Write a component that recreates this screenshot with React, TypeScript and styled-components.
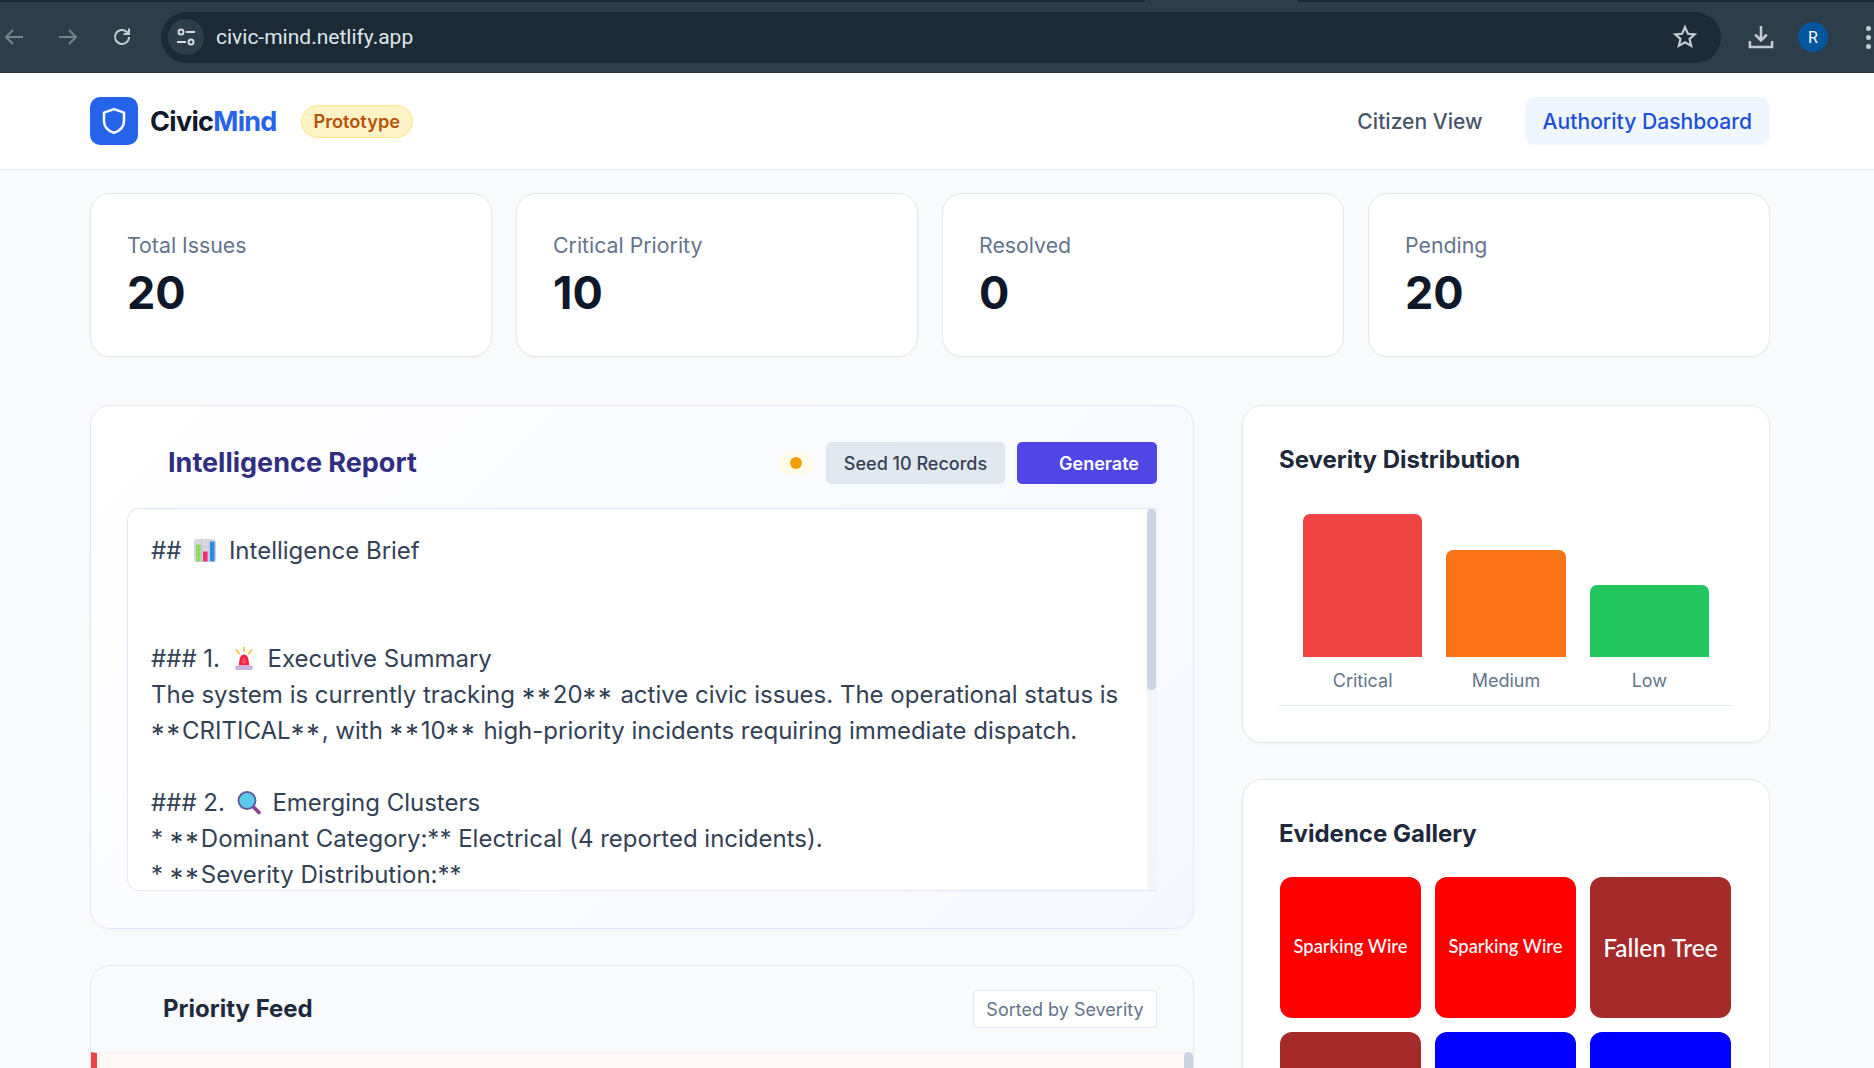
import React from "react";
import styled, { createGlobalStyle } from "styled-components";

const Global = createGlobalStyle`
  html, body { margin: 0; padding: 0; height: 100%; overflow: hidden; background: #f8fafc; }
  body { font-family: Inter, "Liberation Sans", sans-serif; color: #0f172a; }
  * { box-sizing: border-box; }
`;

const Page = styled.div`
  height: 1068px;
  overflow: hidden;
  background: #f8fafc;
`;

/* ---------- browser chrome ---------- */
const Chrome = styled.div`
  height: 73px;
  background: #2d3e4b;
  border-bottom: 1px solid #27353f;
`;
const TabStrip = styled.div`
  height: 2px;
  display: flex;
`;
const TabEdge = styled.div<{ $w: string }>`
  width: ${p => p.$w};
  flex: ${p => (p.$w === "auto" ? 1 : "none")};
  background: #1a2a36;
`;
const TabGap = styled.div`
  width: 153px;
`;
const Toolbar = styled.div`
  height: 70px;
  display: flex;
  align-items: center;
`;
const NavIcon = styled.div<{ $dim?: boolean }>`
  width: 28px;
  height: 28px;
  margin-right: ${p => (p.$dim ? 26 : 20)}px;
  color: ${p => (p.$dim ? "#76838d" : "#c4ccd3")};
  display: flex;
  align-items: center;
  justify-content: center;
  flex: none;
`;
const Omnibox = styled.div`
  flex: none;
  width: 1560px;
  height: 51px;
  margin-left: 5px;
  background: #1a2a36;
  border-radius: 26px;
  display: flex;
  align-items: center;
  padding: 0 23px 0 7px;
`;
const SiteChip = styled.div`
  width: 36px;
  height: 36px;
  border-radius: 50%;
  background: #2d3e4b;
  color: #d5dce2;
  display: flex;
  align-items: center;
  justify-content: center;
  flex: none;
`;
const Url = styled.div`
  margin-left: 12px;
  flex: 1;
  font-family: Roboto, "Noto Sans", sans-serif;
  font-size: 21px;
  color: #dfe6ec;
`;
const ChromeRight = styled.div`
  display: flex;
  align-items: center;
  margin-left: 26px;
  color: #c4ccd3;
`;
const Avatar = styled.div`
  width: 30px;
  height: 30px;
  border-radius: 50%;
  background: #05559f;
  color: #fff;
  font-size: 16px;
  font-family: Roboto, sans-serif;
  display: flex;
  align-items: center;
  justify-content: center;
  margin: 0 38px 0 23px;
`;
const Dots = styled.div`
  display: flex;
  flex-direction: column;
  gap: 4px;
`;
const Dot = styled.span`
  width: 5px;
  height: 5px;
  border-radius: 50%;
  background: #c4ccd3;
`;

/* ---------- app header ---------- */
const Header = styled.header`
  height: 97px;
  background: #fff;
  border-bottom: 1px solid #e2e8f0;
  padding: 0 104px 0 90px;
  display: flex;
  align-items: center;
  justify-content: space-between;
`;
const Brand = styled.div`
  display: flex;
  align-items: center;
`;
const LogoMark = styled.div`
  width: 48px;
  height: 48px;
  border-radius: 10px;
  background: #2563eb;
  color: #fff;
  display: flex;
  align-items: center;
  justify-content: center;
`;
const BrandName = styled.div`
  margin-left: 12px;
  font-size: 27px;
  font-weight: 700;
  letter-spacing: -0.7px;
  color: #0f172a;
`;
const BrandAccent = styled.span`
  color: #2563eb;
`;
const Badge = styled.div`
  margin-left: 24px;
  height: 33px;
  width: 112px;
  border-radius: 17px;
  background: #fef3c7;
  border: 1px solid #fde68a;
  color: #b45309;
  font-size: 18.2px;
  font-weight: 600;
  display: flex;
  align-items: center;
  justify-content: center;
`;
const Nav = styled.nav`
  display: flex;
  align-items: center;
  gap: 24px;
`;
const NavLink = styled.a<{ $active?: boolean }>`
  height: 48px;
  padding: 0 18px;
  border-radius: 10px;
  font-size: 21.1px;
  font-weight: 500;
  display: flex;
  align-items: center;
  color: ${p => (p.$active ? "#1d4ed8" : "#475569")};
  background: ${p => (p.$active ? "#eff6ff" : "transparent")};
`;

/* ---------- body ---------- */
const Main = styled.main`
  width: 1680px;
  margin-left: 90px;
  padding-top: 23px;
`;
const StatGrid = styled.section`
  display: grid;
  grid-template-columns: repeat(4, 402px);
  gap: 24px;
`;
const StatCard = styled.div`
  height: 164px;
  background: #fff;
  border: 1px solid #e2e8f0;
  border-radius: 20px;
  padding: 37px 36px 0;
  box-shadow: 0 1px 3px rgba(15, 23, 42, 0.03);
`;
const StatLabel = styled.div`
  font-size: 21.3px;
  line-height: 28px;
  font-weight: 400;
  color: #64748b;
`;
const StatValue = styled.div`
  margin-top: 6px;
  font-size: 45px;
  line-height: 56px;
  font-weight: 700;
  color: #0f172a;
`;
const Columns = styled.div`
  margin-top: 48px;
  display: grid;
  grid-template-columns: 1104px 528px;
  column-gap: 48px;
  align-items: start;
`;
const Stack = styled.div`
  display: flex;
  flex-direction: column;
  gap: 36px;
`;
const ReportCard = styled.section`
  height: 524px;
  border: 1px solid #e0e7ff;
  border-radius: 20px;
  background: linear-gradient(135deg, #ffffff 0%, #f5f7ff 100%);
  padding: 36px 36px 0;
  box-shadow: 0 1px 3px rgba(15, 23, 42, 0.03);
`;
const ReportHead = styled.div`
  height: 42px;
  display: flex;
  align-items: center;
`;
const ReportTitle = styled.h2`
  margin: 0 0 2px 41px;
  flex: 1;
  font-size: 27px;
  font-weight: 700;
  color: #312e81;
`;
const StatusPill = styled.div`
  width: 36px;
  height: 24px;
  border-radius: 12px;
  background: #fffbeb;
  display: flex;
  align-items: center;
  justify-content: center;
  margin-right: 12px;
`;
const StatusDot = styled.span`
  width: 12px;
  height: 12px;
  border-radius: 50%;
  background: #f59e0b;
`;
const SecondaryButton = styled.button`
  width: 179px;
  height: 42px;
  border: 0;
  border-radius: 5px;
  background: #e2e8f0;
  color: #334155;
  font: 500 18px Inter, sans-serif;
`;
const PrimaryButton = styled.button`
  width: 140px;
  height: 42px;
  margin-left: 12px;
  border: 0;
  border-radius: 5px;
  background: #4f46e5;
  color: #fff;
  font: 600 18px Inter, sans-serif;
  text-align: right;
  padding: 0 18px 0 0;
`;
const ReportBody = styled.div`
  margin-top: 24px;
  height: 383px;
  display: flex;
  background: #fff;
  border: 1px solid #e0e7ff;
  border-right-color: #eef2ff;
  border-radius: 12px 0 0 12px;
  overflow: hidden;
`;
const ReportText = styled.div`
  flex: 1;
  padding: 24px 23px 0;
  font-size: 24px;
  line-height: 36px;
  color: #334155;
  white-space: pre-wrap;
  overflow: hidden;
`;
const ScrollTrack = styled.div`
  flex: none;
  width: 9px;
  background: #f1f5f9;
`;
const ScrollThumb = styled.div`
  height: 181px;
  background: #cbd5e1;
  border-radius: 5px;
`;
const Stars = styled.span`
  font-size: 27px;
  letter-spacing: 2px;
  line-height: 0;
  vertical-align: -5px;
`;
const Emoji = styled.svg`
  width: 24px;
  height: 25px;
  vertical-align: -4px;
  margin: 0 5px;
`;
const FeedCard = styled.section`
  height: 200px;
  background: #f8fafc;
  border: 1px solid #e2e8f0;
  border-radius: 20px;
  overflow: hidden;
`;
const FeedHead = styled.div`
  height: 86px;
  padding: 0 36px 0 72px;
  display: flex;
  align-items: center;
  justify-content: space-between;
`;
const FeedTitle = styled.h2`
  margin: 0 0 2px;
  font-size: 24px;
  font-weight: 700;
  color: #1e293b;
`;
const SortBadge = styled.div`
  width: 184px;
  height: 38px;
  background: #fff;
  border: 1px solid #e2e8f0;
  border-radius: 4px;
  color: #64748b;
  font-size: 18px;
  display: flex;
  align-items: center;
  justify-content: center;
`;
const FeedList = styled.div`
  display: flex;
  height: 120px;
`;
const FeedItem = styled.div`
  flex: 1;
  background: #fef7f7;
  border-left: 6px solid #ef4444;
  border-top: 1px solid #fdf0f0;
`;
const FeedScroll = styled.div`
  width: 9px;
  background: #cbd5e1;
  border-radius: 5px 5px 0 0;
`;
const SideCard = styled.section`
  background: #fff;
  border: 1px solid #e2e8f0;
  border-radius: 20px;
  padding: 36px;
  box-shadow: 0 1px 3px rgba(15, 23, 42, 0.03);
`;
const SideTitle = styled.h2`
  margin: 0;
  font-size: 24px;
  line-height: 36px;
  font-weight: 700;
  color: #1e293b;
`;
const Chart = styled.div`
  height: 228px;
  padding: 0 24px;
  border-bottom: 1px solid #e2e8f0;
  display: grid;
  grid-template-columns: repeat(3, 1fr);
  column-gap: 24px;
  align-items: end;
`;
const BarCol = styled.div`
  display: flex;
  flex-direction: column;
  align-items: stretch;
`;
const Bar = styled.div<{ $h: number; $c: string }>`
  height: ${p => p.$h}px;
  background: ${p => p.$c};
  border-radius: 7px 7px 0 0;
`;
const BarLabel = styled.div`
  height: 48px;
  line-height: 48px;
  text-align: center;
  font-size: 18px;
  color: #64748b;
`;
const Gallery = styled.div`
  margin-top: 25px;
  display: grid;
  grid-template-columns: repeat(3, 141px);
  grid-auto-rows: 141px;
  gap: 14px;
  padding-left: 1px;
`;
const Tile = styled.div<{ $c: string; $big?: boolean }>`
  background: ${p => p.$c};
  border-radius: 12px;
  color: #fff;
  font-family: Lato, sans-serif;
  font-size: ${p => (p.$big ? 24.5 : 18.4)}px;
  font-weight: 500;
  display: flex;
  align-items: center;
  justify-content: center;
  padding-bottom: ${p => (p.$big ? 0 : 3)}px;
`;

const ChartEmoji = () => (
  <Emoji viewBox="0 0 24 24">
    <rect x="1" y="0.5" width="22" height="23" rx="3" fill="#d9d6e2" />
    <path d="M1 8h22M1 16h22M8.5 1v22M16 1v22" stroke="#c3bfcf" strokeWidth="0.8" />
    <rect x="3" y="6" width="4.6" height="17" fill="#8fdc5d" />
    <rect x="10" y="13" width="4.6" height="10" fill="#ea2f78" />
    <rect x="17" y="3" width="4.6" height="20" fill="#2a8fe0" />
  </Emoji>
);
const SirenEmoji = () => (
  <Emoji viewBox="0 0 24 24">
    <path d="M12 1v4M4.500 3.500l2.500 3.500M19.500 3.500L17 7" stroke="#fbc02d" strokeWidth="1.6" strokeLinecap="round" />
    <path d="M7 19c0-7 1.500-11 5-11s5 4 5 11z" fill="#f5223f" />
    <path d="M10 17c0-3 .5-5 2-7 1 2 2 4 2 7z" fill="#ff6b78" opacity=".6" />
    <rect x="3.500" y="19" width="17" height="4.500" rx="1" fill="#c9b6e0" />
  </Emoji>
);
const LensEmoji = () => (
  <Emoji viewBox="0 0 24 24">
    <path d="M15 15l7 7" stroke="#8a3f90" strokeWidth="3.6" strokeLinecap="round" />
    <circle cx="10" cy="10" r="8.500" fill="#5bcbeb" stroke="#5f5a9e" strokeWidth="1.8" />
  </Emoji>
);

const stats = [
  ["Total Issues", "20"],
  ["Critical Priority", "10"],
  ["Resolved", "0"],
  ["Pending", "20"],
];

const bars: [string, number, string][] = [
  ["Critical", 143, "#ef4444"],
  ["Medium", 107, "#f97316"],
  ["Low", 72, "#22c55e"],
];

export default function App() {
  return (
    <Page>
      <Global />
      <Chrome>
        <TabStrip>
          <TabEdge $w="1145px" />
          <TabGap />
          <TabEdge $w="auto" />
        </TabStrip>
        <Toolbar>
          <NavIcon $dim>
            <svg width="24" height="24" viewBox="0 0 24 24" fill="none" stroke="currentColor" strokeWidth="2"><path d="M21 12H4M11 5l-7 7 7 7" /></svg>
          </NavIcon>
          <NavIcon $dim>
            <svg width="24" height="24" viewBox="0 0 24 24" fill="none" stroke="currentColor" strokeWidth="2"><path d="M3 12h17M13 5l7 7-7 7" /></svg>
          </NavIcon>
          <NavIcon>
            <svg width="24" height="24" viewBox="0 0 24 24" fill="none" stroke="currentColor" strokeWidth="2"><path d="M19 12a7 7 0 1 1-2.100-5L19 9" /><path d="M19 3.500V9h-5.500" /></svg>
          </NavIcon>
          <Omnibox>
            <SiteChip>
              <svg width="22" height="22" viewBox="0 0 22 22" fill="none" stroke="currentColor" strokeWidth="2"><circle cx="6" cy="6" r="2.500" /><circle cx="16" cy="16" r="2.500" /><path d="M11 6h9M2 16h9" /></svg>
            </SiteChip>
            <Url>civic-mind.netlify.app</Url>
            <svg width="26" height="26" viewBox="0 0 24 24" fill="none" stroke="#c4ccd3" strokeWidth="2"><path d="M12 3l2.700 6 6.300.6-4.800 4.200 1.500 6.400L12 16.900 6.300 20.200l1.500-6.400L3 9.600 9.300 9z" /></svg>
          </Omnibox>
          <ChromeRight>
            <svg width="28" height="28" viewBox="0 0 24 24" fill="none" stroke="currentColor" strokeWidth="2.200"><path d="M12 2.500v12M7 10l5 5 5-5" /><path d="M2.500 15.500v5h19v-5" /></svg>
            <Avatar>R</Avatar>
            <Dots><Dot /><Dot /><Dot /></Dots>
          </ChromeRight>
        </Toolbar>
      </Chrome>
      <Header>
        <Brand>
          <LogoMark>
            <svg width="30" height="30" viewBox="0 0 24 24" fill="none" stroke="currentColor" strokeWidth="2" strokeLinejoin="round"><path d="M12 2.500l8 2.800v6.700c0 5-3.500 8-8 9.500-4.500-1.500-8-4.500-8-9.500V5.300z" /></svg>
          </LogoMark>
          <BrandName>Civic<BrandAccent>Mind</BrandAccent></BrandName>
          <Badge>Prototype</Badge>
        </Brand>
        <Nav>
          <NavLink>Citizen View</NavLink>
          <NavLink $active>Authority Dashboard</NavLink>
        </Nav>
      </Header>
      <Main>
        <StatGrid>
          {stats.map(([label, value]) => (
            <StatCard key={label}>
              <StatLabel>{label}</StatLabel>
              <StatValue>{value}</StatValue>
            </StatCard>
          ))}
        </StatGrid>
        <Columns>
          <Stack>
            <ReportCard>
              <ReportHead>
                <ReportTitle>Intelligence Report</ReportTitle>
                <StatusPill><StatusDot /></StatusPill>
                <SecondaryButton>Seed 10 Records</SecondaryButton>
                <PrimaryButton>Generate</PrimaryButton>
              </ReportHead>
              <ReportBody>
                <ReportText>
                  ## <ChartEmoji /> Intelligence Brief{"\n\n\n"}### 1. <SirenEmoji /> Executive Summary{"\n"}The system is currently tracking <Stars>**</Stars>20<Stars>**</Stars> active civic issues. The operational status is <Stars>**</Stars>CRITICAL<Stars>**</Stars>, with <Stars>**</Stars>10<Stars>**</Stars> high-priority incidents requiring immediate dispatch.{"\n\n"}### 2. <LensEmoji /> Emerging Clusters{"\n"}* <Stars>**</Stars>Dominant Category:** Electrical (4 reported incidents).{"\n"}* <Stars>**</Stars>Severity Distribution:**
                </ReportText>
                <ScrollTrack><ScrollThumb /></ScrollTrack>
              </ReportBody>
            </ReportCard>
            <FeedCard>
              <FeedHead>
                <FeedTitle>Priority Feed</FeedTitle>
                <SortBadge>Sorted by Severity</SortBadge>
              </FeedHead>
              <FeedList>
                <FeedItem />
                <FeedScroll />
              </FeedList>
            </FeedCard>
          </Stack>
          <Stack>
            <SideCard>
              <SideTitle>Severity Distribution</SideTitle>
              <Chart>
                {bars.map(([label, h, c]) => (
                  <BarCol key={label}>
                    <Bar $h={h} $c={c} />
                    <BarLabel>{label}</BarLabel>
                  </BarCol>
                ))}
              </Chart>
            </SideCard>
            <SideCard>
              <SideTitle>Evidence Gallery</SideTitle>
              <Gallery>
                <Tile $c="#ff0000">Sparking Wire</Tile>
                <Tile $c="#ff0000">Sparking Wire</Tile>
                <Tile $c="#a52a2a" $big>Fallen Tree</Tile>
                <Tile $c="#a52a2a" />
                <Tile $c="#0000ff" />
                <Tile $c="#0000ff" />
              </Gallery>
            </SideCard>
          </Stack>
        </Columns>
      </Main>
    </Page>
  );
}
